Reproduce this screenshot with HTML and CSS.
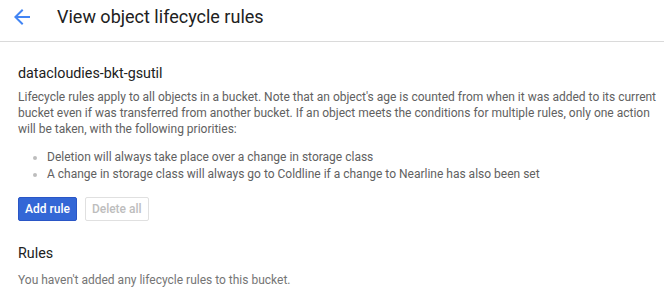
FILE: index.html
```html
<!DOCTYPE html>
<html>
<head>
<meta charset="utf-8">
<link rel="stylesheet" href="styles.css">
</head>
<body>
<header class="topbar">
  <svg class="back" width="24" height="24" viewBox="0 0 24 24"><path d="M20 11H7.83l5.59-5.59L12 4l-8 8 8 8 1.41-1.41L7.83 13H20v-2z" fill="#4285f4"/></svg>
  <h1 class="title">View object lifecycle rules</h1>
</header>
<main class="content">
  <h2 class="bucket">datacloudies-bkt-gsutil</h2>
  <p class="desc">Lifecycle rules apply to all objects in a bucket. Note that an object's age is counted from when it was added to its current bucket even if was transferred from another bucket. If an object meets the conditions for multiple rules, only one action will be taken, with the following priorities:</p>
  <ul class="list">
    <li>Deletion will always take place over a change in storage class</li>
    <li>A change in storage class will always go to Coldline if a change to Nearline has also been set</li>
  </ul>
  <div class="actions">
    <button class="btn primary">Add rule</button>
    <button class="btn disabled">Delete all</button>
  </div>
  <h2 class="rules">Rules</h2>
  <p class="empty">You haven't added any lifecycle rules to this bucket.</p>
</main>
</body>
</html>
```
FILE: styles.css
```css
html, body { margin: 0; padding: 0; background: #fff; }
body { font-family: Roboto, "Noto Sans", Arial, sans-serif; color: #212121; width: 664px; overflow: hidden; }
.topbar { display: flex; align-items: center; height: 41px; border-bottom: 1px solid #dadada; padding-left: 10px; }
.back { display: block; margin-top: -8px; }
.title { font-size: 18px; font-weight: 400; margin: -8px 0 0 23px; color: #212121; }
.content { padding: 0 4px 0 18px; }
.bucket { font-size: 14.3px; font-weight: 400; margin: 21px 0 0; line-height: 20px; }
.desc { font-size: 12px; line-height: 16px; color: #616161; margin: 6px 0 0; }
.list { margin: 12px 0 0; padding-left: 29px; color: #616161; font-size: 12px; line-height: 17px; }
.list li::marker { color: #bdbdbd; }
.actions { display: flex; gap: 8px; margin-top: 14px; }
.btn { font-family: inherit; font-size: 12px; height: 24px; padding: 0 6px; border-radius: 2px; font-weight: 500; }
.primary { background: #3367d6; color: #fff; border: 1px solid #2a56c6; }
.disabled { background: #fff; color: #bdbdbd; border: 1px solid #e0e0e0; }
.rules { font-size: 14.3px; font-weight: 400; margin: 22px 0 0; line-height: 20px; }
.empty { font-size: 12px; line-height: 16px; color: #757575; margin: 9px 0 0; }
```
